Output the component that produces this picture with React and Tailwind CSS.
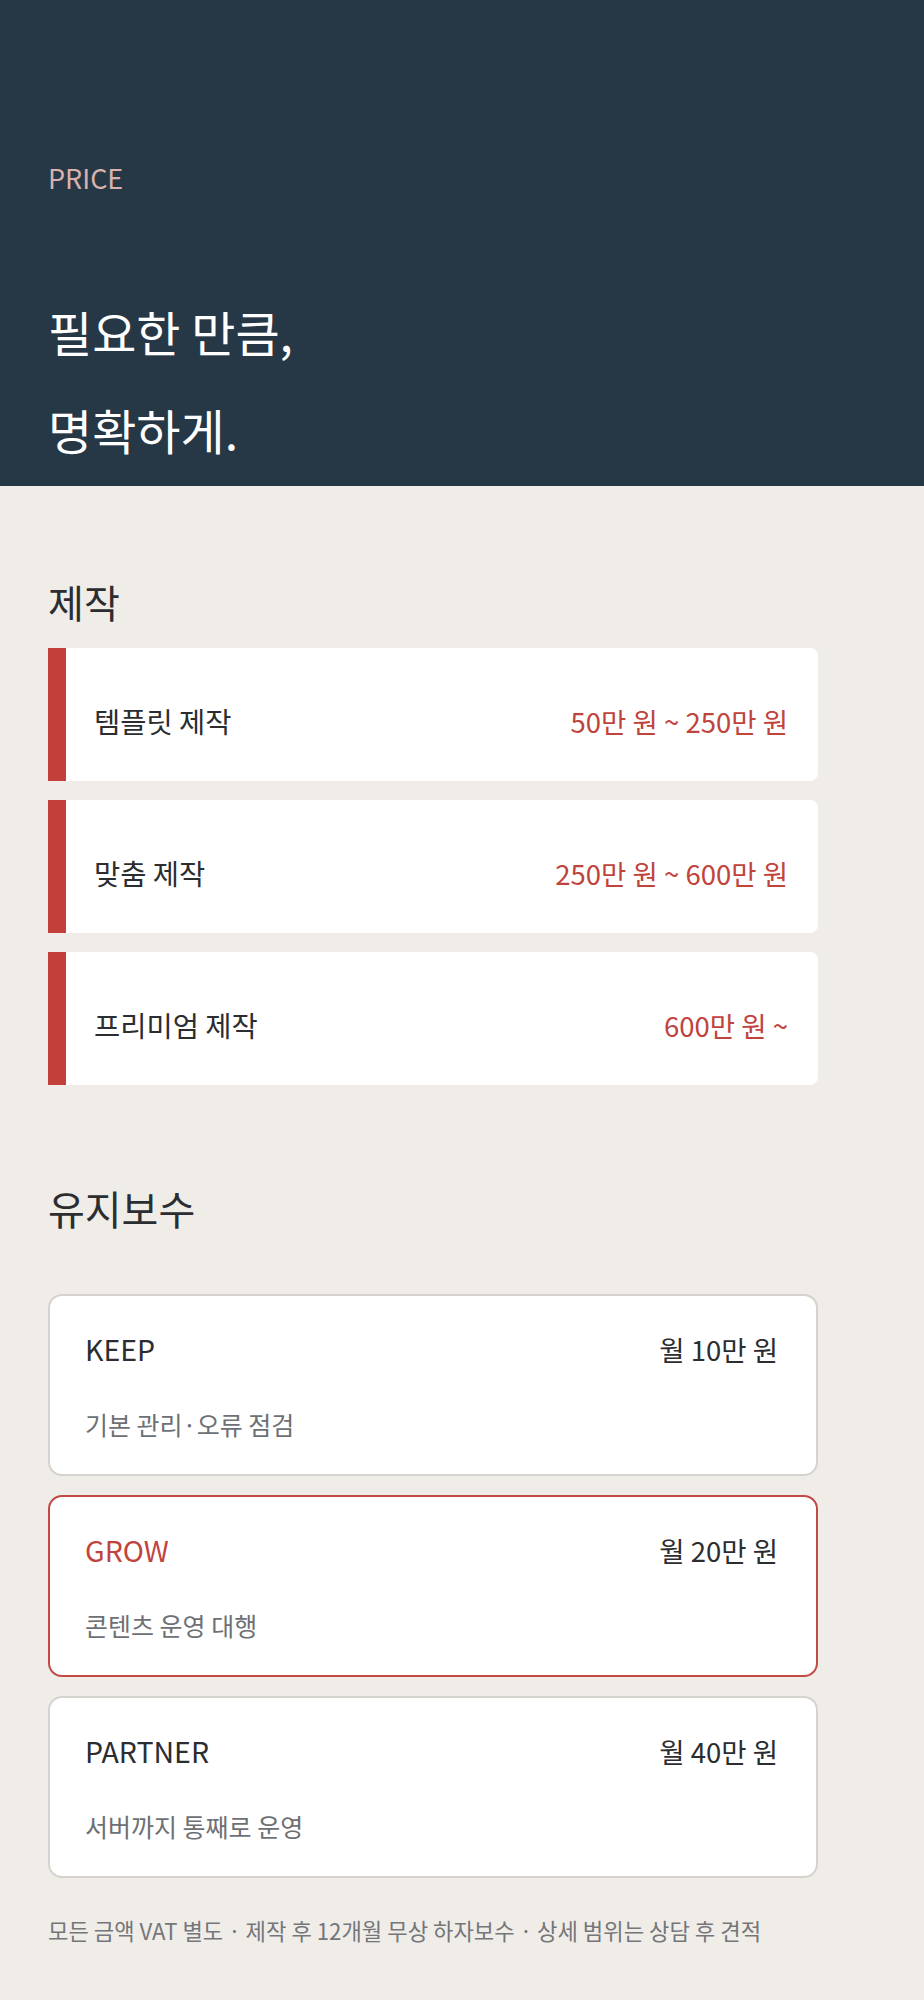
import React from 'react';

const builds = [
  { name: '템플릿 제작', price: '50만 원 ~ 250만 원' },
  { name: '맞춤 제작', price: '250만 원 ~ 600만 원' },
  { name: '프리미엄 제작', price: '600만 원 ~' },
];

const plans = [
  { name: 'KEEP', price: '월 10만 원', desc: '기본 관리·오류 점검' },
  { name: 'GROW', price: '월 20만 원', desc: '콘텐츠 운영 대행', featured: true },
  { name: 'PARTNER', price: '월 40만 원', desc: '서버까지 통째로 운영' },
];

export default function App() {
  return (
    <div className="min-h-screen bg-[#f0ede9] font-['Noto_Sans_CJK_KR','Noto_Sans',sans-serif] text-[#2b2d30]">
      {/* Hero */}
      <header className="bg-[#263846] px-12 pt-[158px] pb-[8px]">
        <p className="text-[27px] leading-[40px] text-[#d9b2ad]">PRICE</p>
        <h1 className="mt-[84px] text-[48px] leading-[98px] font-normal text-white">
          필요한 만큼,
          <br />
          명확하게.
        </h1>
      </header>

      <main className="px-12 pt-[89px] pb-[80px]">
        <div className="max-w-[770px]">
          {/* Build */}
          <h2 className="text-[39px] leading-[52px] font-normal">제작</h2>
          <div className="mt-[21px] flex flex-col gap-[19px]">
            {builds.map((b) => (
              <div
                key={b.name}
                className="h-[133px] flex justify-between bg-white border-l-[18px] border-[#c3403a] rounded-r-lg pl-[28px] pr-[30px] pt-[54px]"
              >
                <span className="text-[28.5px] leading-[38px]">{b.name}</span>
                <span className="text-[27.5px] leading-[38px] text-[#c0433d]">{b.price}</span>
              </div>
            ))}
          </div>

          {/* Maintenance */}
          <h2 className="mt-[97px] text-[40px] leading-[52px] font-normal">유지보수</h2>
          <div className="mt-[60px] flex flex-col gap-[19px]">
            {plans.map((p) => (
              <div
                key={p.name}
                className={`h-[182px] bg-white rounded-[14px] border-2 pl-[35px] pr-[38px] pt-[35px] ${
                  p.featured ? 'border-[#c24a45]' : 'border-[#d6d2cd]'
                }`}
              >
                <div className="flex justify-between">
                  <span className={`text-[28.5px] leading-[36px] ${p.featured ? 'text-[#bf443e]' : ''}`}>
                    {p.name}
                  </span>
                  <span className="text-[27.5px] leading-[36px]">{p.price}</span>
                </div>
                <p className="mt-[41px] text-[25px] leading-[32px] text-[#6d7074]">{p.desc}</p>
              </div>
            ))}
          </div>

          <p className="mt-[36px] text-[22.2px] leading-[32px] text-[#74767a] whitespace-nowrap">
            모든 금액 VAT 별도 · 제작 후 12개월 무상 하자보수 · 상세 범위는 상담 후 견적
          </p>
        </div>
      </main>
    </div>
  );
}
